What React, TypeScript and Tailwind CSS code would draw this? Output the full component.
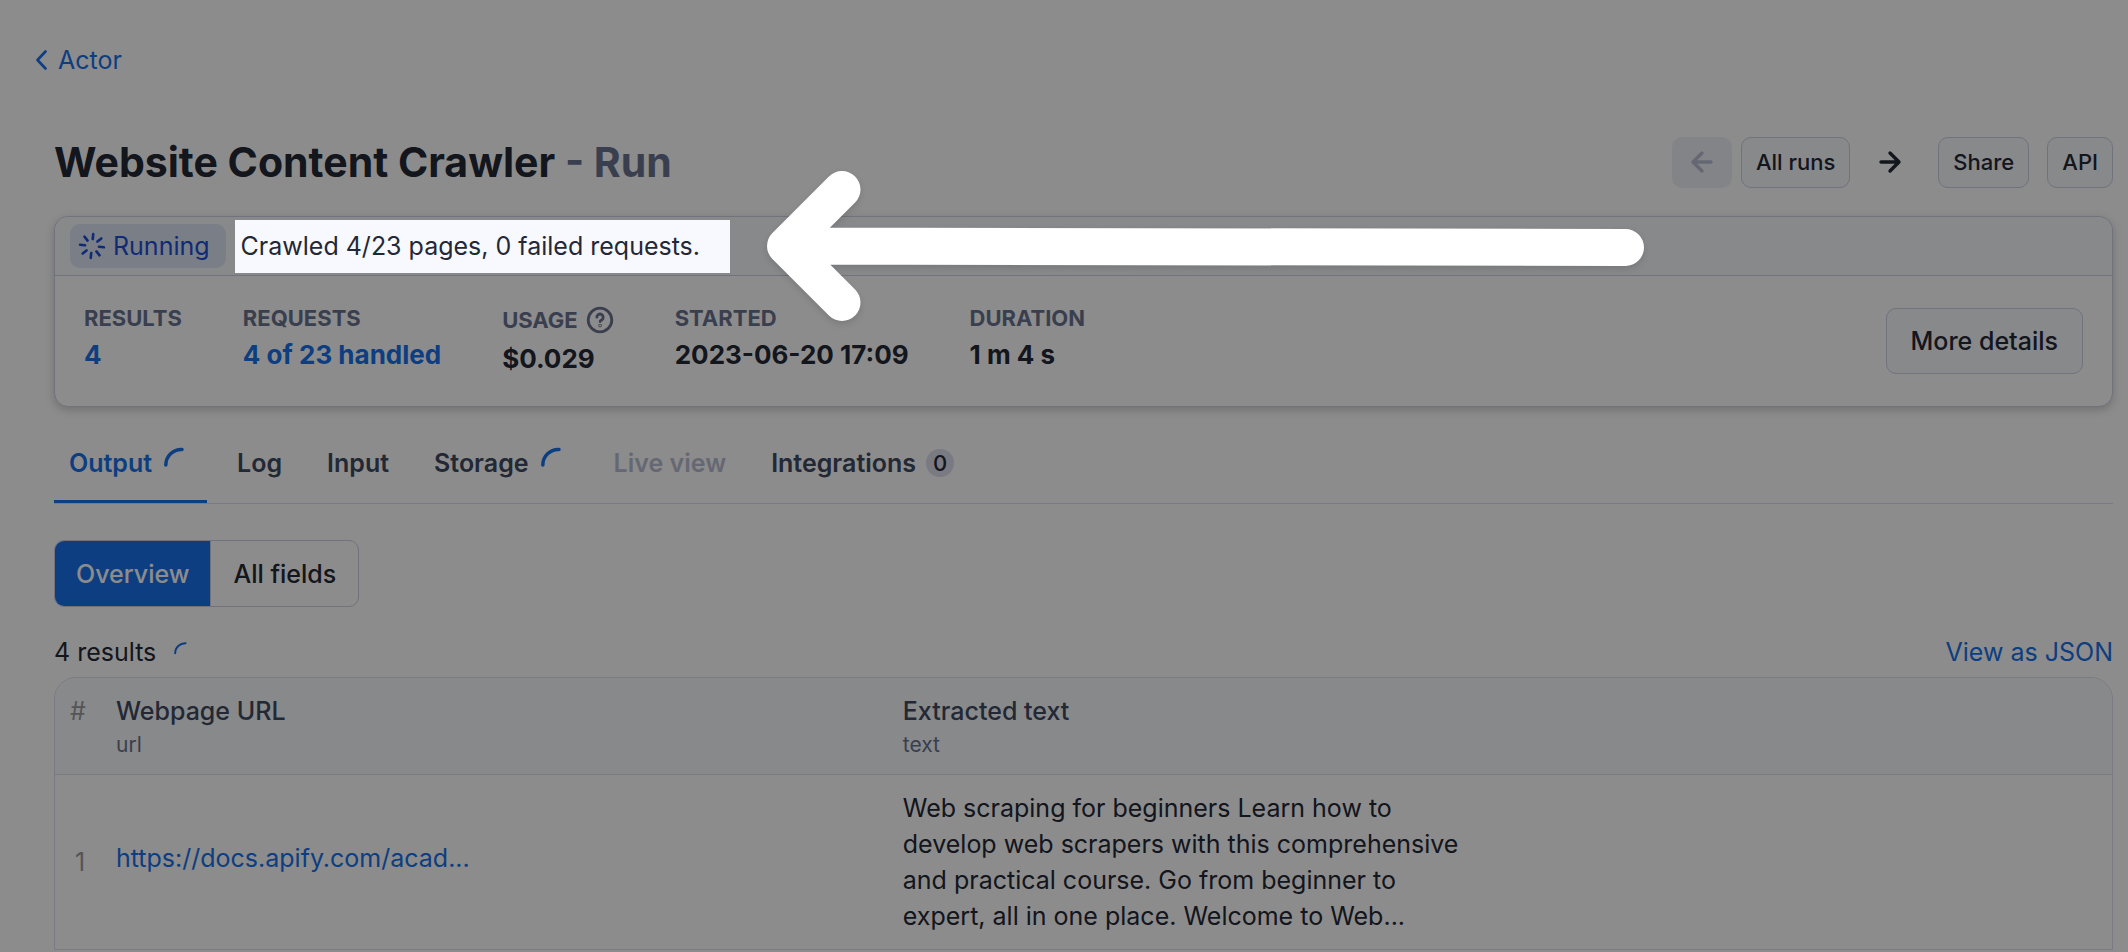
import type { ReactNode } from "react";

function BusyArc({ className, stroke }: { className: string; stroke: number }) {
  return (
    <svg viewBox="0 0 28 28" className={`overflow-visible ${className}`} fill="none" stroke="#1672eb" strokeWidth={stroke} strokeLinecap="round">
      <path d="M1.8 16A15.6 15.6 0 0 1 18 0.4" />
    </svg>
  );
}

function RunningIcon() {
  return (
    <svg viewBox="-14 -14 28 28" className="size-7" stroke="#1d4fd8" strokeWidth="2.6" strokeLinecap="round">
      {[6, 51, 96, 141, 186, 231, 276, 321].map((angle) => (
        <line key={angle} x1="0" y1="-7" x2="0" y2="-12" transform={`rotate(${angle})`} />
      ))}
    </svg>
  );
}

function HelpIcon() {
  return (
    <svg viewBox="0 0 28 28" className="size-7" fill="none" stroke="#6b7490" strokeWidth="2.8" strokeLinecap="round" strokeLinejoin="round">
      <circle cx="14" cy="14" r="11.8" />
      <path d="M10.8 11.2a3.2 3.2 0 1 1 4.8 2.8c-1 .6-1.5 1-1.5 1.6" />
      <circle cx="14.1" cy="19.6" r="0.4" />
    </svg>
  );
}

function Arrow({ back = false }: { back?: boolean }) {
  return (
    <svg viewBox="0 0 24 24" className="size-6" fill="none" stroke="currentColor" strokeWidth="3.4" strokeLinecap="round" strokeLinejoin="round">
      {back ? <path d="M21 12H3M12 3L3 12L12 21" /> : <path d="M3 12H21M12 3L21 12L12 21" />}
    </svg>
  );
}

function SmallButton({ children }: { children: ReactNode }) {
  return (
    <button className="h-[51px] rounded-[10px] border border-[#ccd0e2] bg-[#f8f9fc] px-[14px] text-[22px] font-medium text-[#242836]">
      {children}
    </button>
  );
}

function Stat({ label, icon, value, link = false }: { label: string; icon?: ReactNode; value: string; link?: boolean }) {
  return (
    <div>
      <dt className={`flex items-center gap-2 text-[22px] font-bold text-[#6b7490] ${icon ? "h-9" : "h-8"}`}>
        {label}
        {icon}
      </dt>
      <dd className="mt-[3px] text-[26px] leading-9 font-bold text-[#242836]">
        {link ? <a href="#" className="text-[#1672eb]">{value}</a> : value}
      </dd>
    </div>
  );
}

const tabs = [
  { name: "Output", active: true, busy: true },
  { name: "Log" },
  { name: "Input" },
  { name: "Storage", busy: true },
  { name: "Live view", disabled: true },
  { name: "Integrations", count: 0 },
];

function tabColor(tab: { active?: boolean; disabled?: boolean }) {
  if (tab.active) return "border-[#1672eb] text-[#1672eb]";
  if (tab.disabled) return "border-transparent text-[#b9bed2]";
  return "border-transparent text-[#414962]";
}

export default function App() {
  return (
    <div className="relative min-h-screen overflow-hidden bg-white pr-[15px] pl-[54px] font-[Inter,sans-serif] text-[25px] leading-9 text-[#242836]">
      <nav className="-ml-5 flex pt-[42px]">
        <a href="#" className="flex items-center gap-[10px] text-[#1672eb]">
          <svg viewBox="0 0 14 20" className="h-5 w-[14px]" fill="none" stroke="currentColor" strokeWidth="2.6" strokeLinecap="round" strokeLinejoin="round">
            <path d="M11.5 1.500L3.500 10L11.500 18.500" />
          </svg>
          Actor
        </a>
      </nav>

      <header className="mt-[58px] flex items-center justify-between">
        <h1 className="text-[41px] leading-[52px] font-bold">
          Website Content Crawler <span className="text-[#6b7490]">- Run</span>
        </h1>
        <div className="flex items-center">
          <button disabled aria-label="Previous run" className="mr-[9px] flex h-[51px] w-[60px] items-center justify-center rounded-[10px] bg-[#eff1f8] text-[#b9bed2]">
            <Arrow back />
          </button>
          <SmallButton>All runs</SmallButton>
          <button aria-label="Next run" className="mr-[18px] ml-[10px] flex h-[51px] w-[60px] items-center justify-center">
            <Arrow />
          </button>
          <div className="flex gap-[18px]">
            <SmallButton>Share</SmallButton>
            <SmallButton>API</SmallButton>
          </div>
        </div>
      </header>

      <section className="mt-7 rounded-[14px] border border-[#ccd0e2] bg-white shadow-[0_3px_10px_rgba(0,0,0,0.2)]">
        <div className="flex h-[59px] items-center gap-[9px] rounded-t-[14px] border-b border-[#ccd0e2] bg-[#f8f9fc] pl-[15px]">
          <span className="flex h-11 items-center gap-[7px] rounded-[10px] bg-[#dfe5f6] pr-4 pl-2 text-[#1d4fd8]">
            <RunningIcon />
            Running
          </span>
          <p className="relative z-20 flex h-[53px] items-center bg-[#f8f9fe] pr-[30px] pl-[6px]">
            Crawled 4/23 pages, 0 failed requests.
          </p>
        </div>
        <div className="flex items-center justify-between pr-[29px] pl-[29px]">
          <dl className="flex gap-[61px] pt-[26px] pb-[29px]">
            <Stat label="RESULTS" value="4" link />
            <Stat label="REQUESTS" value="4 of 23 handled" link />
            <Stat label="USAGE" icon={<HelpIcon />} value="$0.029" />
            <Stat label="STARTED" value="2023-06-20 17:09" />
            <Stat label="DURATION" value="1 m 4 s" />
          </dl>
          <button className="h-[66px] rounded-[10px] border border-[#ccd0e2] bg-[#f8f9fc] px-6 font-medium">More details</button>
        </div>
      </section>

      <div role="tablist" className="mt-[38px] flex gap-[15px] border-b border-[#dcdfed]">
        {tabs.map((tab) => (
          <button
            key={tab.name}
            role="tab"
            aria-selected={tab.active ?? false}
            disabled={tab.disabled}
            className={`flex items-center border-b-[3px] px-[15px] pb-[19px] font-semibold ${tabColor(tab)}`}
          >
            {tab.name}
            {tab.busy && <BusyArc className="ml-3 size-7" stroke={3.5} />}
            {tab.count !== undefined && (
              <span className="ml-[10px] flex size-7 items-center justify-center rounded-full bg-[#dcdfed] text-[22px] font-medium text-[#242836]">{tab.count}</span>
            )}
          </button>
        ))}
      </div>

      <div className="mt-9 flex">
        <div className="flex overflow-hidden rounded-[10px] border border-[#ccd0e2]">
          <button className="h-[65px] border-r border-[#ccd0e2] bg-[#1672eb] px-[21px] font-medium text-white">Overview</button>
          <button className="h-[65px] px-[22px] font-medium">All fields</button>
        </div>
      </div>

      <div className="mt-[27px] flex items-center justify-between">
        <p className="flex items-center">
          4 results
          <BusyArc className="ml-[18px] size-[18px]" stroke={3} />
        </p>
        <a href="#" className="text-[#1672eb]">View as JSON</a>
      </div>

      <div className="mt-[7px] overflow-hidden rounded-t-[22px] border border-[#dcdfed]">
        <table className="w-full table-fixed text-left">
          <thead>
            <tr className="border-b border-[#dcdfed] bg-[#f8f9fc] align-top">
              <th className="w-[61px] pt-[15px] pl-[15px] font-normal text-[#9b9b9f]">#</th>
              <th className="w-[38.25%] pt-[15px] pb-[13px] font-medium text-[#414962]">
                Webpage URL
                <div className="text-[21px] leading-8 font-normal text-[#6b7490]">url</div>
              </th>
              <th className="pt-[15px] pb-[13px] font-medium text-[#414962]">
                Extracted text
                <div className="text-[21px] leading-8 font-normal text-[#6b7490]">text</div>
              </th>
            </tr>
          </thead>
          <tbody>
            <tr>
              <td className="pl-5 text-[#9b9b9f]">1</td>
              <td className="pb-2">
                <a href="#" className="text-[#1672eb]">https://docs.apify.com/acad...</a>
              </td>
              <td className="py-[15px]">
                <p className="max-w-[570px]">
                  Web scraping for beginners Learn how to develop web scrapers with this comprehensive and practical course. Go from beginner to expert, all in one place. Welcome to Web...
                </p>
              </td>
            </tr>
          </tbody>
        </table>
      </div>

      <div className="pointer-events-none absolute inset-0 z-10 bg-black/45" />
      <svg viewBox="0 0 900 180" className="pointer-events-none absolute top-[156px] left-[752px] z-20 h-[180px] w-[900px] drop-shadow-md" fill="none" stroke="white" strokeWidth="37" strokeLinecap="round" strokeLinejoin="round">
        <path d="M90 33.500L33.500 90L90 146.500M33.500 90L873.500 91.500" />
      </svg>
    </div>
  );
}
